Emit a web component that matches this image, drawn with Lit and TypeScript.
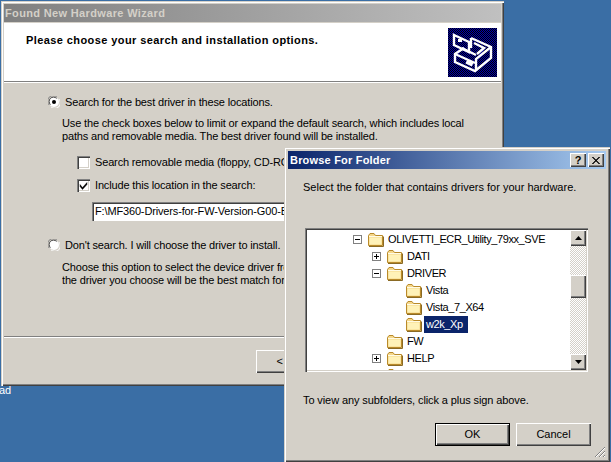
import { LitElement, html, css, svg } from "lit";
import { customElement } from "lit/decorators.js";

const folder = html`<svg class="folder" width="17" height="15" viewBox="0 0 17 15">
  <path d="M1.5 13.5V3.5L3 1.5H7L8.5 3.5H15.5V13.5Z" fill="#f5d78a" stroke="#b98a2a"/>
  <path d="M2.5 5.5H14.5V12.5H2.5Z" fill="#fff2b8"/>
  <path d="M2 4.5H15" stroke="#fffbe6"/>
  <path d="M2 14.5H16.5V4.5" stroke="#8a6a24" fill="none"/>
</svg>`;

const expander = (open: boolean) => html`<svg class="exp" width="9" height="9" viewBox="0 0 9 9">
  <rect x=".5" y=".5" width="8" height="8" fill="#fff" stroke="#808080"/>
  <path d="M2 4.5H7${open ? "" : "M4.5 2V7"}" stroke="#000" fill="none"/>
</svg>`;

const radio = (on: boolean) => html`<svg class="radio" width="12" height="12" viewBox="0 0 12 12">
  <circle cx="6" cy="6" r="5" fill="#fff"/>
  <path d="M1.2 9A5.5 5.5 0 0 1 9 1.2" stroke="#808080" fill="none"/>
  <path d="M2.4 8.6A4.3 4.3 0 0 1 8.6 2.4" stroke="#404040" fill="none"/>
  <path d="M10.8 3A5.5 5.5 0 0 1 3 10.8" stroke="#fff" fill="none"/>
  ${on ? svg`<circle cx="6" cy="6" r="2" fill="#000"/>` : ""}
</svg>`;

const checkbox = (on: boolean) => html`<span class="check">
  ${on ? html`<svg width="9" height="9" viewBox="0 0 9 9"><path d="M1 3.5L3.5 6.5L8 1.5V3.5L3.5 8.5L1 5.5Z" fill="#000" stroke="#000" stroke-width=".4"/></svg>` : ""}
</span>`;

const hardware = html`<svg class="hw" width="49" height="49" viewBox="0 0 49 49">
  <defs><pattern id="dith" width="2" height="2" patternUnits="userSpaceOnUse">
    <rect width="2" height="2" fill="#0000b0"/><rect width="1" height="1" fill="#000"/><rect x="1" y="1" width="1" height="1" fill="#000"/>
  </pattern></defs>
  <rect width="49" height="49" fill="url(#dith)"/>
  <g fill="none" stroke="#fff" stroke-width="2.4">
    <path d="M23 10L43 19V30L27 43L7 34V26L16 20"/>
    <path d="M43 19L28 31V43"/>
    <path d="M7 26L27 35"/>
    <path d="M6 7L21 14V24L6 17Z"/>
    <path d="M23 10V20"/>
    <path d="M14 20L28 27"/>
    <path d="M26 15L36 20L29 26"/>
  </g>
  <rect x="10" y="11" width="4" height="3" fill="#fff"/>
  <rect x="18" y="33" width="7" height="4" fill="#fff" transform="rotate(24 21 35)"/>
</svg>`;

const rows: { label: string; depth: number; exp?: "open" | "closed"; sel?: boolean }[] = [
  { label: "OLIVETTI_ECR_Utility_79xx_SVE", depth: 0, exp: "open" },
  { label: "DATI", depth: 1, exp: "closed" },
  { label: "DRIVER", depth: 1, exp: "open" },
  { label: "Vista", depth: 2 },
  { label: "Vista_7_X64", depth: 2 },
  { label: "w2k_Xp", depth: 2, sel: true },
  { label: "FW", depth: 1 },
  { label: "HELP", depth: 1, exp: "closed" },
  { label: "", depth: 1 },
];

@customElement("app-root")
export class AppRoot extends LitElement {
  static styles = css`
    :host {
      display: block;
      position: relative;
      width: 611px;
      height: 462px;
      overflow: hidden;
      background: #3a6ea5;
      font: 11px/13px "Liberation Sans", Arial, sans-serif;
      color: #000;
    }
    .win {
      position: absolute;
      box-sizing: border-box;
      display: flex;
      flex-direction: column;
      background: #d4d0c8;
      padding: 3px;
      box-shadow: inset 1px 1px 0 #d4d0c8, inset 2px 2px 0 #fff, inset -1px -1px 0 #404040, inset -2px -2px 0 #808080;
    }
    .wizard { left: 1px; top: 1px; width: 503px; height: 385px; }
    .browse { left: 284px; top: 147px; width: 326px; height: 315px; padding: 4px; }
    .title {
      flex: none;
      height: 18px;
      display: flex;
      align-items: center;
      padding-left: 2px;
      font-weight: 700;
      color: #fff;
    }
    .wizard .title { background: linear-gradient(90deg, #808080, #c0c0c0); color: #d4d0c8; padding-left: 1px; letter-spacing: 0.35px; }
    .browse .title { background: linear-gradient(90deg, #0a246a, #a6caf0); }
    .browse .title .grow { flex: 1; letter-spacing: 0.2px; }
    .cap {
      width: 16px;
      height: 14px;
      margin-right: 2px;
      box-sizing: border-box;
      background: #d4d0c8;
      box-shadow: inset 1px 1px 0 #fff, inset -1px -1px 0 #404040, inset -2px -2px 0 #808080;
      display: flex;
      align-items: center;
      justify-content: center;
      color: #000;
    }
    .header {
      flex: none;
      margin-top: 1px;
      height: 58px;
      box-sizing: border-box;
      background: #fff;
      padding: 11px 4px 0 22px;
      display: flex;
      justify-content: space-between;
      align-items: flex-start;
      font-weight: 700;
      letter-spacing: 0.41px;
    }
    .header .hw { margin-top: -6px; flex: none; }
    .sep { flex: none; height: 1px; background: #808080; border-bottom: 1px solid #fff; }
    .body {
      flex: 1;
      min-height: 0;
      overflow: hidden;
      padding: 12px 0 0 44px;
      display: flex;
      flex-direction: column;
      letter-spacing: -0.15px;
    }
    .opt { display: flex; align-items: center; gap: 5px; height: 14px; white-space: nowrap; }
    .opt.second { margin-top: 17px; }
    .para { margin: 8px 0 0 14px; white-space: nowrap; }
    .para.second { margin-top: 9px; width: 222px; overflow: hidden; }
    .check-row { display: flex; align-items: center; gap: 5px; margin: 10px 0 0 29px; height: 13px; width: 207px; overflow: hidden; white-space: nowrap; flex: none; }
    .check-row.first { margin-top: 13px; }
    .check {
      flex: none;
      width: 13px;
      height: 13px;
      box-sizing: border-box;
      background: #fff;
      box-shadow: inset 1px 1px 0 #808080, inset 2px 2px 0 #404040, inset -1px -1px 0 #fff, inset -2px -2px 0 #d4d0c8;
      display: flex;
      align-items: center;
      justify-content: center;
    }
    .path {
      margin: 10px 0 0 44px;
      width: 192px;
      height: 19px;
      box-sizing: border-box;
      background: #fff;
      padding: 3px 0 3px 3px;
      flex: none;
      overflow: hidden;
      white-space: nowrap;
      box-shadow: inset 1px 1px 0 #808080, inset 2px 2px 0 #404040;
    }
    .footer {
      flex: none;
      height: 45px;
      width: 280px;
      overflow: hidden;
      display: flex;
      padding: 12px 0 0 252px;
      box-sizing: border-box;
    }
    .btn {
      flex: none;
      width: 75px;
      height: 23px;
      box-sizing: border-box;
      background: #d4d0c8;
      display: flex;
      align-items: center;
      justify-content: center;
      box-shadow: inset 1px 1px 0 #fff, inset -1px -1px 0 #404040, inset -2px -2px 0 #808080;
    }
    .btn.def {
      box-shadow: inset 0 0 0 1px #000, inset 2px 2px 0 #fff, inset -2px -2px 0 #404040, inset -3px -3px 0 #808080;
    }
    .content { flex: 1; min-height: 0; padding: 0 0 0 15px; display: flex; flex-direction: column; position: relative; }
    .lead { margin-top: 12px; }
    .tree {
      margin: 34px 0 0 2px;
      width: 283px;
      height: 144px;
      box-sizing: border-box;
      padding: 2px;
      background: #fff;
      display: flex;
      flex: none;
      box-shadow: inset 1px 1px 0 #808080, inset 2px 2px 0 #404040, inset -1px -1px 0 #fff, inset -2px -2px 0 #d4d0c8;
    }
    .rows { flex: 1; min-width: 0; overflow: hidden; padding-top: 1px; }
    .row { display: flex; align-items: center; height: 17px; white-space: nowrap; letter-spacing: -0.4px; }
    .slot { flex: none; width: 14px; display: flex; align-items: center; }
    .folder { flex: none; margin-right: 2px; }
    .label { padding: 2px 3px 2px 2px; }
    .label.sel { background: #0a246a; color: #fff; width: 39px; }
    .scroll {
      flex: none;
      width: 16px;
      display: flex;
      flex-direction: column;
      background: repeating-conic-gradient(#d4d0c8 0 25%, #fff 0 50%) 0 0 / 2px 2px;
    }
    .arrow {
      flex: none;
      height: 16px;
      background: #d4d0c8;
      display: flex;
      align-items: center;
      justify-content: center;
      box-shadow: inset 1px 1px 0 #fff, inset -1px -1px 0 #404040, inset -2px -2px 0 #808080;
    }
    .thumb {
      flex: none;
      height: 23px;
      margin: 29px 0 56px;
      background: #d4d0c8;
      box-shadow: inset 1px 1px 0 #fff, inset -1px -1px 0 #404040, inset -2px -2px 0 #808080;
    }
    .hint { margin-top: 22px; letter-spacing: -0.1px; }
    .actions { display: flex; gap: 6px; margin: 16px 0 0 132px; }
    .grip { position: absolute; right: 0; bottom: 0; }
    .stray { position: absolute; left: -1px; top: 384px; color: #fff; }
  `;

  render() {
    return html`
      <div class="stray">ad</div>
      <div class="win wizard">
        <div class="title">Found New Hardware Wizard</div>
        <div class="header">
          <div>Please choose your search and installation options.</div>
          ${hardware}
        </div>
        <div class="sep"></div>
        <div class="body">
          <div class="opt">${radio(true)}<span>Search for the best driver in these locations.</span></div>
          <div class="para">Use the check boxes below to limit or expand the default search, which includes local<br />paths and removable media. The best driver found will be installed.</div>
          <div class="check-row first">${checkbox(false)}<span>Search removable media (floppy, CD-ROM...)</span></div>
          <div class="check-row">${checkbox(true)}<span>Include this location in the search:</span></div>
          <div class="path">F:\\MF360-Drivers-for-FW-Version-G00-B</div>
          <div class="opt second">${radio(false)}<span>Don't search. I will choose the driver to install.</span></div>
          <div class="para second">Choose this option to select the device driver from a list.<br />the driver you choose will be the best match for your hardware.</div>
        </div>
        <div class="sep"></div>
        <div class="footer"><div class="btn">&lt; Back</div></div>
      </div>

      <div class="win browse">
        <div class="title">
          <span class="grow">Browse For Folder</span>
          <span class="cap">?</span>
          <span class="cap">
            <svg width="8" height="7" viewBox="0 0 8 7"><path d="M0 0L7 7M1 0L8 7M7 0L0 7M8 0L1 7" stroke="#000" stroke-width=".8"/></svg>
          </span>
        </div>
        <div class="content">
          <div class="lead">Select the folder that contains drivers for your hardware.</div>
          <div class="tree">
            <div class="rows">
              ${rows.map(
                (r) => html`<div class="row" style="padding-left:${46 + 19 * r.depth}px">
                  <span class="slot">${r.exp ? expander(r.exp === "open") : ""}</span>
                  ${folder}
                  <span class="label ${r.sel ? "sel" : ""}">${r.label}</span>
                </div>`
              )}
            </div>
            <div class="scroll">
              <div class="arrow"><svg width="7" height="4" viewBox="0 0 7 4"><path d="M3.5 0L7 4H0Z"/></svg></div>
              <div class="thumb"></div>
              <div class="arrow"><svg width="7" height="4" viewBox="0 0 7 4"><path d="M0 0H7L3.5 4Z"/></svg></div>
            </div>
          </div>
          <div class="hint">To view any subfolders, click a plus sign above.</div>
          <div class="actions">
            <div class="btn def">OK</div>
            <div class="btn">Cancel</div>
          </div>
          <svg class="grip" width="12" height="12" viewBox="0 0 12 12">
            <path d="M11 1L1 11M11 5L5 11M11 9L9 11" stroke="#808080" fill="none"/>
            <path d="M11 2L2 11M11 6L6 11M11 10L10 11" stroke="#fff" fill="none"/>
          </svg>
        </div>
      </div>
    `;
  }
}
